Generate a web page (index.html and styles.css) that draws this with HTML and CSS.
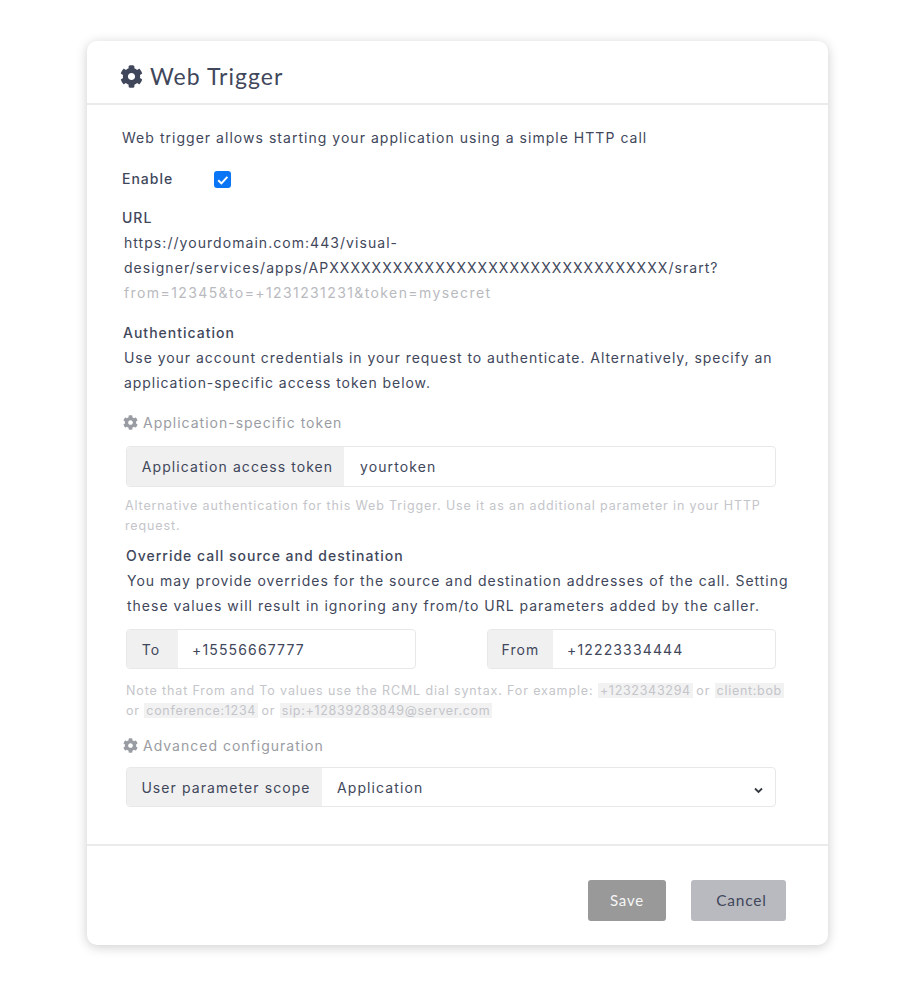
FILE: index.html
```html
<!DOCTYPE html>
<html lang="en">
<head>
  <meta charset="UTF-8">
  <title>Web Trigger</title>
  <link rel="stylesheet" href="styles.css">
</head>
<body>
  <svg class="defs" width="0" height="0">
    <symbol id="cog" viewBox="0 0 512 512">
      <path d="M487.4 315.7l-42.6-24.6c4.3-23.2 4.3-47 0-70.2l42.6-24.6c4.9-2.8 7.1-8.6 5.5-14-11.1-35.6-30-67.8-54.7-94.6-3.8-4.1-10-5.1-14.8-2.3L380.8 110c-17.9-15.4-38.5-27.3-60.8-35.1V25.8c0-5.6-3.9-10.5-9.4-11.7-36.7-8.2-74.3-7.8-109.2 0-5.5 1.2-9.4 6.1-9.4 11.7V75c-22.2 7.9-42.8 19.8-60.8 35.1L88.7 85.5c-4.9-2.8-11-1.9-14.8 2.3-24.7 26.7-43.6 58.9-54.7 94.6-1.7 5.4.6 11.2 5.5 14L67.3 221c-4.3 23.2-4.3 47 0 70.2l-42.6 24.6c-4.9 2.8-7.1 8.6-5.5 14 11.1 35.6 30 67.8 54.7 94.6 3.8 4.1 10 5.1 14.8 2.3l42.6-24.6c17.9 15.4 38.5 27.3 60.8 35.1v49.2c0 5.6 3.9 10.5 9.4 11.7 36.7 8.2 74.3 7.8 109.2 0 5.5-1.2 9.4-6.1 9.4-11.7v-49.2c22.2-7.9 42.8-19.8 60.8-35.1l42.6 24.6c4.9 2.8 11 1.9 14.8-2.3 24.7-26.7 43.6-58.9 54.7-94.6 1.5-5.5-.7-11.3-5.6-14.1zM256 336c-44.1 0-80-35.9-80-80s35.9-80 80-80 80 35.9 80 80-35.9 80-80 80z"/>
    </symbol>
  </svg>

  <div class="modal">
    <div class="modal-header">
      <svg class="title-cog"><use href="#cog"/></svg>
      <h1>Web Trigger</h1>
    </div>

    <div class="modal-body">
      <p class="intro">Web trigger allows starting your application using a simple HTTP call</p>

      <div class="enable-row">
        <span class="label">Enable</span>
        <span class="checkbox">
          <svg width="16" height="16" viewBox="0 0 16 16"><path d="M3.2 8.2l3.2 3.2 6-6.6" fill="none" stroke="#fff" stroke-width="2"/></svg>
        </span>
      </div>

      <div class="url-block">
        <div class="label">URL</div>
        <div class="url">https://yourdomain.com:443/visual-<br>designer/services/apps/APXXXXXXXXXXXXXXXXXXXXXXXXXXXXXXXX/srart?<br><span class="url-params">from=12345&amp;to=+1231231231&amp;token=mysecret</span></div>
      </div>

      <div class="auth-block">
        <div class="label">Authentication</div>
        <p>Use your account credentials in your request to authenticate. Alternatively, specify an<br>application-specific access token below.</p>
      </div>

      <div class="section-title token-title">
        <svg class="small-cog"><use href="#cog"/></svg>
        Application-specific token
      </div>

      <div class="input-group token-group">
        <span class="addon addon-token">Application access token</span>
        <input type="text" value="yourtoken">
      </div>
      <p class="help help-token">Alternative authentication for this Web Trigger. Use it as an additional parameter in your HTTP request.</p>

      <div class="override-block">
        <div class="label">Override call source and destination</div>
        <p>You may provide overrides for the source and destination addresses of the call. Setting<br>these values will result in ignoring any from/to URL parameters added by the caller.</p>
      </div>

      <div class="two-col">
        <div class="input-group">
          <span class="addon addon-to">To</span>
          <input type="text" value="+15556667777">
        </div>
        <div class="input-group">
          <span class="addon addon-from">From</span>
          <input type="text" value="+12223334444">
        </div>
      </div>
      <p class="help help-note">Note that From and To values use the RCML dial syntax. For example: <code>+1232343294</code> or <code>client:bob</code><br>or <code>conference:1234</code> or <code>sip:+12839283849@server.com</code></p>

      <div class="section-title advanced-title">
        <svg class="small-cog"><use href="#cog"/></svg>
        Advanced configuration
      </div>

      <div class="input-group select-group">
        <span class="addon addon-scope">User parameter scope</span>
        <select>
          <option>Application</option>
        </select>
        <svg class="chevron" width="9" height="7" viewBox="0 0 9 7"><path d="M1 1.5l3.5 3.5 3.5-3.5" fill="none" stroke="#343a40" stroke-width="1.8"/></svg>
      </div>
    </div>

    <div class="modal-footer">
      <button class="btn btn-save">Save</button>
      <button class="btn btn-cancel">Cancel</button>
    </div>
  </div>
</body>
</html>
```

FILE: styles.css
```css
body {
  margin: 0;
  padding: 41px 0 45px 87px;
  background-color: #fff;
  font-family: Inter, sans-serif;
  font-size: 14px;
  line-height: 25px;
  letter-spacing: 1px;
  color: #41475b;
}
p {
  margin: 0;
}
.defs {
  position: absolute;
}
.modal {
  width: 741px;
  height: 904px;
  box-sizing: border-box;
  background-color: #fff;
  border-radius: 10px;
  box-shadow: 0 2px 12px rgba(0, 0, 0, 0.2);
  display: flex;
  flex-direction: column;
}
.modal-header {
  height: 64px;
  box-sizing: border-box;
  padding: 8px 0 0 33px;
  display: flex;
  align-items: center;
  gap: 7px;
  border-bottom: 2px solid #ebebeb;
}
.title-cog {
  width: 23px;
  height: 23px;
  fill: #41475b;
}
h1 {
  margin: 0;
  font-family: Lato, sans-serif;
  font-size: 23px;
  font-weight: 400;
  letter-spacing: 1.05px;
}
.modal-body {
  flex: 1;
  padding: 20px 0 0 35px;
}
.intro {
  letter-spacing: 1.03px;
}
.label {
  font-weight: 500;
}
.enable-row {
  margin-top: 17px;
  display: flex;
  align-items: center;
  height: 25px;
}
.enable-row .label {
  width: 92px;
  padding-bottom: 2px;
}
.checkbox {
  width: 17px;
  height: 17px;
  border-radius: 3px;
  background-color: #0a76f6;
  display: flex;
  align-items: center;
  justify-content: center;
}
.url-block {
  margin-top: 13px;
}
.url {
  padding-left: 2px;
  letter-spacing: 1.05px;
}
.url-params {
  color: #b9bac0;
  letter-spacing: 1.4px;
}
.auth-block {
  margin-top: 15px;
  padding-left: 1px;
}
.auth-block p {
  padding-left: 1px;
  letter-spacing: 0.95px;
}
.section-title {
  display: flex;
  align-items: center;
  gap: 5px;
  color: #9a9ca3;
  padding-left: 1px;
}
.small-cog {
  width: 15px;
  height: 15px;
  fill: #9a9ca3;
}
.token-title {
  margin-top: 15px;
}
.input-group {
  display: flex;
  height: 40px;
  box-sizing: border-box;
  width: 650px;
  margin-left: 4px;
  border: 1px solid #e8e8e8;
  border-radius: 4px;
  overflow: hidden;
  position: relative;
  background-color: #fff;
}
.token-group {
  height: 41px;
  margin-top: 11px;
}
.addon {
  background-color: #f0f0f0;
  display: flex;
  align-items: center;
  justify-content: center;
  flex-shrink: 0;
  box-sizing: border-box;
  letter-spacing: 1.08px;
}
.addon-token {
  width: 217px;
  padding-left: 4px;
}
.addon-to {
  width: 51px;
  padding-right: 3px;
}
.addon-from {
  width: 65px;
}
.addon-scope {
  width: 195px;
  padding-left: 3px;
}
input,
select {
  flex: 1;
  min-width: 0;
  border: none;
  outline: none;
  padding: 0 15px;
  background: transparent;
  font-family: Inter, sans-serif;
  font-size: 14px;
  letter-spacing: 1.1px;
  color: #41475b;
}
.token-group input {
  padding-left: 16px;
}
.two-col input {
  padding-left: 14px;
  letter-spacing: 1.15px;
}
select {
  appearance: none;
}
.chevron {
  position: absolute;
  right: 12px;
  top: 19px;
}
.help {
  font-size: 12.5px;
  line-height: 20px;
  letter-spacing: 0.87px;
  color: #c4c5ca;
  padding-left: 38px;
  margin-left: -35px;
}
.help-token {
  margin-top: 9px;
  width: 650px;
}
.override-block {
  margin-top: 7px;
  padding-left: 4px;
}
.override-block p {
  padding-left: 1px;
}
.two-col {
  margin-top: 11px;
  display: grid;
  grid-template-columns: 290px 289px;
  column-gap: 71px;
  margin-left: 4px;
}
.two-col .input-group {
  width: auto;
  margin-left: 0;
}
.help-note {
  margin-top: 12px;
  padding-left: 39px;
  width: 665px;
}
code {
  font-family: inherit;
  background-color: #f2f2f2;
  padding: 0 2px;
  margin-right: -1px;
  letter-spacing: 0.7px;
}
.advanced-title {
  margin-top: 12px;
}
.select-group {
  margin-top: 9px;
}
.modal-footer {
  height: 101px;
  box-sizing: border-box;
  border-top: 2px solid #ebebeb;
  display: flex;
  justify-content: flex-end;
  gap: 25px;
  padding: 34px 42px 0 0;
}
.btn {
  height: 41px;
  border: none;
  border-radius: 3px;
  font-family: Lato, sans-serif;
  font-size: 15px;
  letter-spacing: 0.8px;
  padding: 0 0 2px;
}
.btn-save {
  width: 78px;
  background-color: #999;
  color: #f5f5f5;
}
.btn-cancel {
  width: 95px;
  background-color: #b9bac0;
  color: #41475b;
  font-size: 15.5px;
  padding-left: 6px;
}
```
